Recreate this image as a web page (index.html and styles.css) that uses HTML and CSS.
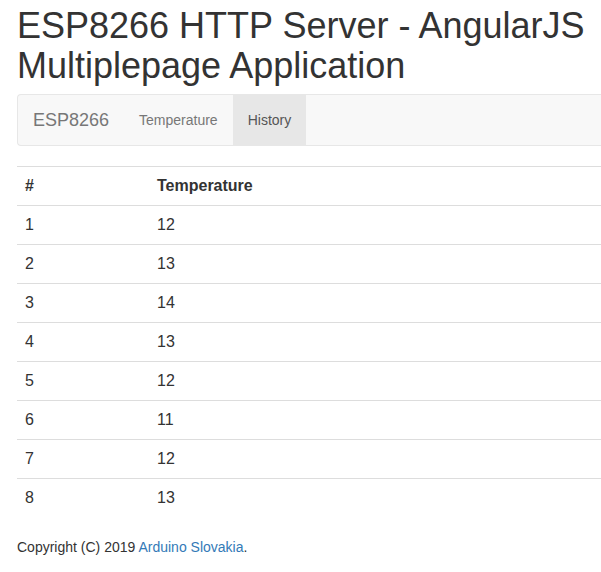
FILE: index.html
```html
<!DOCTYPE html>
<html>
<head>
<meta charset="utf-8">
<title>ESP8266 HTTP Server</title>
<link rel="stylesheet" href="styles.css">
</head>
<body>
<div class="container">
  <h1 class="title">ESP8266 HTTP Server - AngularJS Multiplepage Application</h1>
  <nav class="navbar">
    <a class="brand" href="#">ESP8266</a>
    <ul class="nav">
      <li><a href="#">Temperature</a></li>
      <li class="active"><a href="#">History</a></li>
    </ul>
  </nav>
  <table class="table">
    <thead>
      <tr><th class="col-num">#</th><th>Temperature</th></tr>
    </thead>
    <tbody>
      <tr><td>1</td><td>12</td></tr>
      <tr><td>2</td><td>13</td></tr>
      <tr><td>3</td><td>14</td></tr>
      <tr><td>4</td><td>13</td></tr>
      <tr><td>5</td><td>12</td></tr>
      <tr><td>6</td><td>11</td></tr>
      <tr><td>7</td><td>12</td></tr>
      <tr><td>8</td><td>13</td></tr>
    </tbody>
  </table>
  <footer class="footer">Copyright (C) 2019 <a href="#">Arduino Slovakia</a>.</footer>
</div>
</body>
</html>
```

FILE: styles.css
```css
html, body {
  margin: 0;
  padding: 0;
  background: #fff;
}
body {
  font-family: "Liberation Sans", Arial, Helvetica, sans-serif;
  font-size: 14px;
  line-height: 20px;
  color: #333;
}
.container {
  padding-left: 17px;
}
.title {
  font-size: 36px;
  font-weight: 400;
  line-height: 39.6px;
  margin: 6px 0 9px;
  color: #333;
}
.navbar {
  display: flex;
  height: 50px;
  background: #f8f8f8;
  border: 1px solid #e7e7e7;
  border-right: none;
  border-radius: 4px 0 0 4px;
  margin-bottom: 20px;
}
.brand {
  display: block;
  padding: 15px;
  font-size: 18px;
  line-height: 20px;
  color: #777;
  text-decoration: none;
}
.nav {
  display: flex;
  list-style: none;
  margin: 0;
  padding: 0;
}
.nav a {
  display: block;
  padding: 15px;
  line-height: 20px;
  font-size: 14px;
  color: #777;
  text-decoration: none;
}
.nav .active a {
  background: #e7e7e7;
  color: #555;
}
.table {
  width: 100%;
  border-collapse: collapse;
  font-size: 16px;
  line-height: 22px;
  margin: 0;
}
.table th,
.table td {
  text-align: left;
  padding: 8px;
  border-top: 1px solid #ddd;
  vertical-align: top;
}
.table th {
  font-weight: 700;
}
.col-num {
  width: 116px;
}
.footer {
  margin-top: 20px;
  font-size: 14px;
  line-height: 20px;
}
.footer a {
  color: #337ab7;
  text-decoration: none;
}
```
